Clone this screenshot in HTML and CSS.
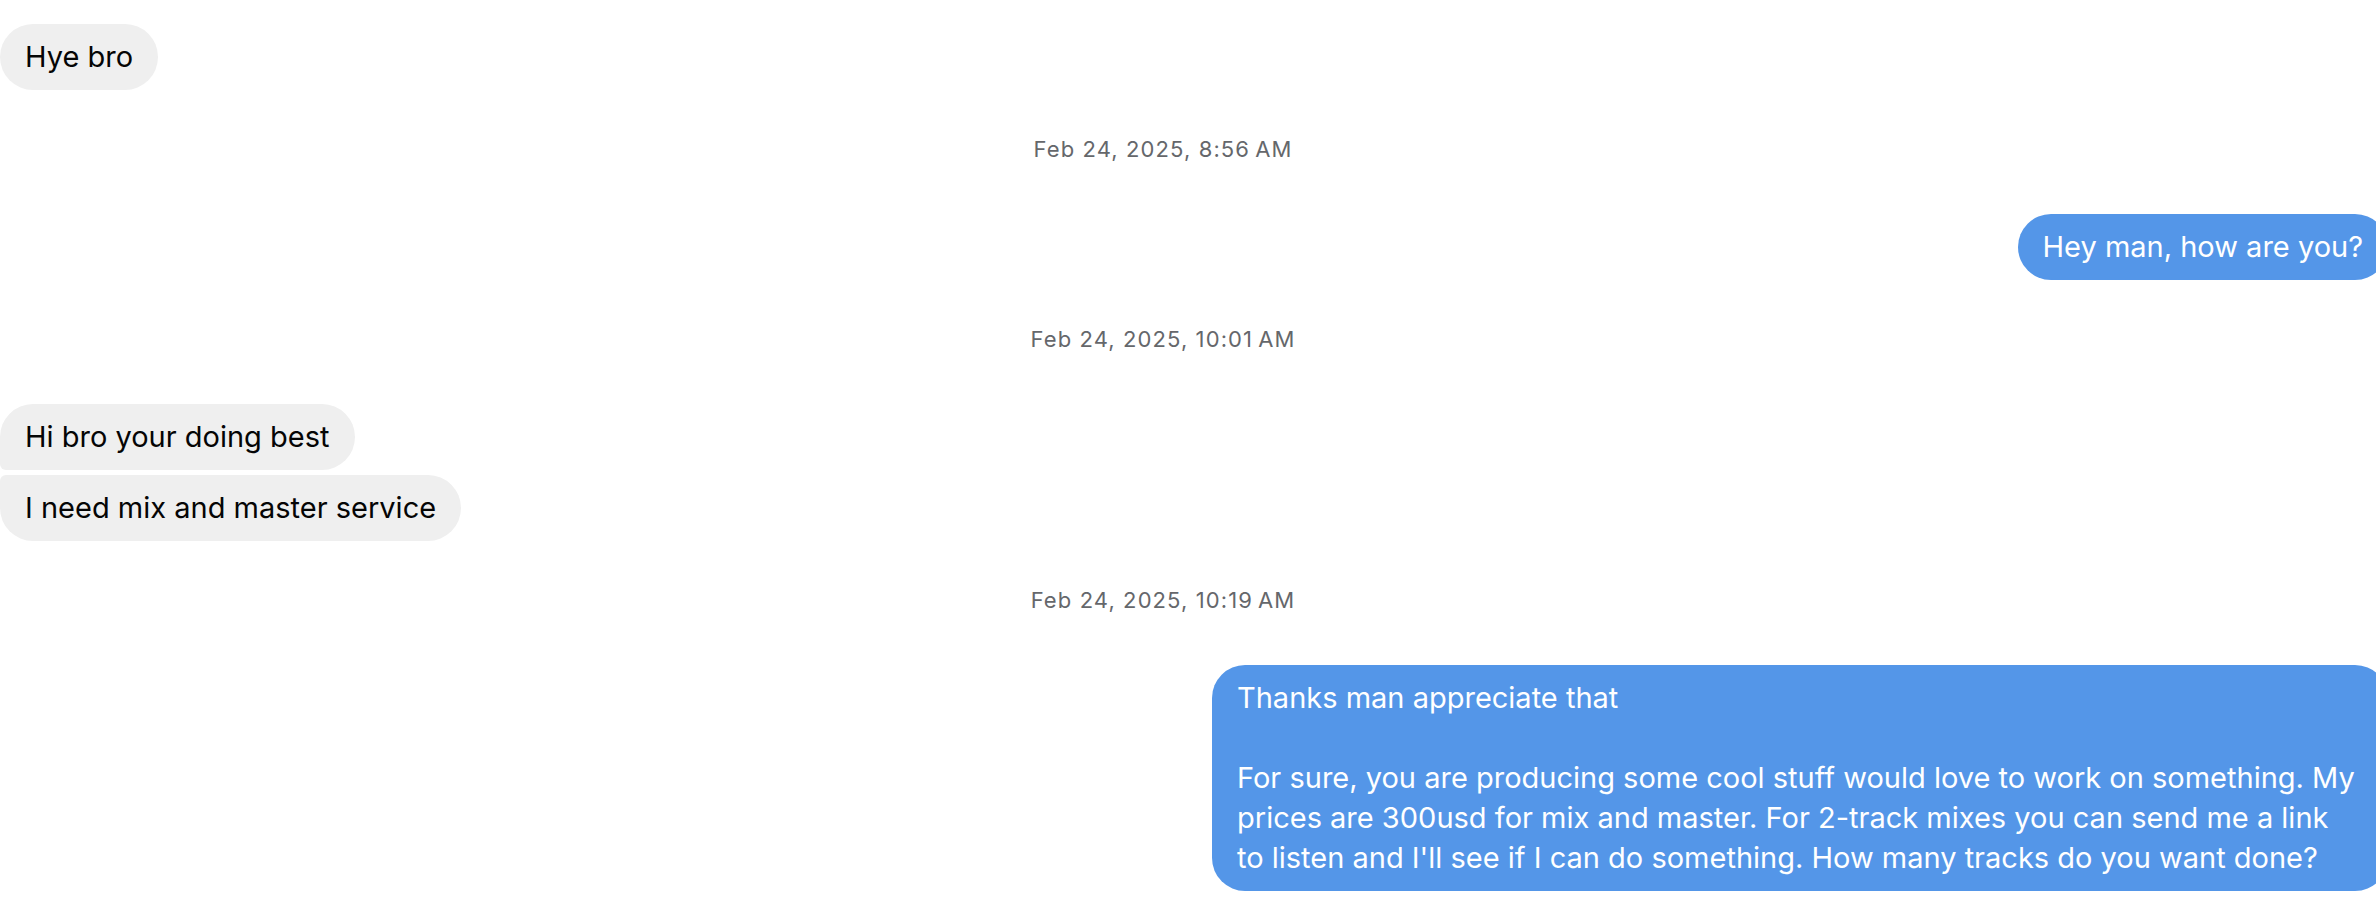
FILE: index.html
```html
<!DOCTYPE html>
<html lang="en">
<head>
<meta charset="utf-8">
<title>Conversation</title>
<link rel="stylesheet" href="styles.css">
</head>
<body>
<div class="thread">
  <div class="row row-in">
    <div class="bubble bubble-in">Hye bro</div>
  </div>

  <div class="stamp">Feb 24, 2025, 8:56&#8239;AM</div>

  <div class="row row-out">
    <div class="bubble bubble-out">Hey man, how are you?</div>
  </div>

  <div class="stamp">Feb 24, 2025, 10:01&#8239;AM</div>

  <div class="row row-in group">
    <div class="bubble bubble-in first">Hi bro your doing best</div>
    <div class="bubble bubble-in last">I need mix and master service</div>
  </div>

  <div class="stamp">Feb 24, 2025, 10:19&#8239;AM</div>

  <div class="row row-out">
    <div class="bubble bubble-out long">Thanks man appreciate that

For sure, you are producing some cool stuff would love to work on something. My prices are 300usd for mix and master. For 2-track mixes you can send me a link to listen and I'll see if I can do something. How many tracks do you want done?</div>
  </div>
</div>
</body>
</html>
```

FILE: styles.css
```css
html, body {
  margin: 0;
  padding: 0;
  background: #ffffff;
  overflow: hidden;
}

body {
  font-family: Inter, "Noto Sans", "Liberation Sans", sans-serif;
}

.thread {
  width: calc(100% + 12px);
  padding-top: 24px;
  display: flex;
  flex-direction: column;
}

.row {
  display: flex;
  flex-direction: column;
}

.row-in {
  align-items: flex-start;
}

.row-out {
  align-items: flex-end;
}

.group {
  gap: 5px;
}

.bubble {
  font-size: 29px;
  line-height: 40px;
  padding: 13px 25px;
  border-radius: 33px;
  white-space: pre-wrap;
  box-sizing: border-box;
}

.bubble-in {
  background: #efefef;
  color: #050505;
}

.bubble-out {
  background: #5496e8;
  color: #ffffff;
}

.bubble-in.first {
  border-bottom-left-radius: 6px;
}

.bubble-in.last {
  border-top-left-radius: 6px;
}

.long {
  max-width: 1176px;
}

.stamp {
  font-size: 22px;
  letter-spacing: 1.1px;
  line-height: 28px;
  color: #65676b;
  text-align: center;
  padding-right: 62px;
  margin: 45px 0 51px;
}
```
